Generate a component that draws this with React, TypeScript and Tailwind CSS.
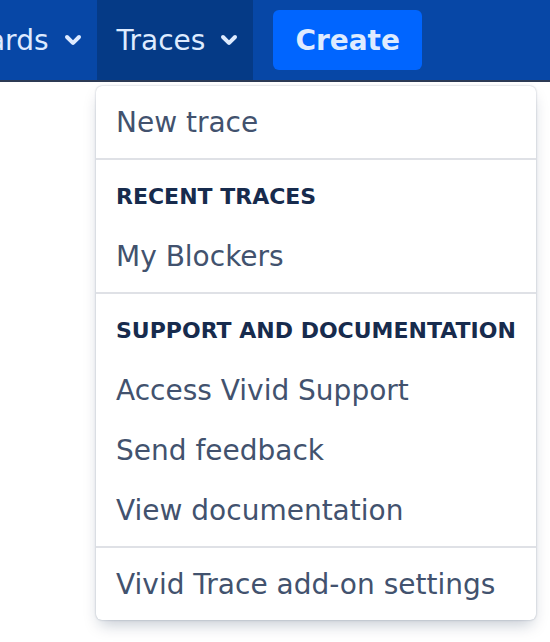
import React from "react";

const ChevronDown = () => (
    <svg viewBox="0 0 24 24" className="w-12 h-12 shrink-0 mt-[-2px]" fill="currentColor">
        <path d="M8.292 10.293a1.009 1.009 0 0 0 0 1.419l2.939 2.965c.218.215.5.322.779.322s.556-.107.769-.322l2.93-2.955a1.01 1.01 0 0 0 0-1.419.987.987 0 0 0-1.406 0l-2.298 2.317-2.307-2.327a.99.99 0 0 0-1.406 0z" />
    </svg>
);

const NavItem = ({ label, active }: { label: string; active?: boolean }) => (
    <div
        className={`flex items-center pl-[20px] h-full text-[28px] text-[#deebff] ${
            active ? "bg-[#053a86]" : ""
        }`}
    >
        <span className="whitespace-nowrap pt-[2px]">{label}</span>
        <ChevronDown />
    </div>
);

const MenuItem = ({ children }: { children: React.ReactNode }) => (
    <div className="h-[60px] pt-[2px] leading-[58px] px-[20px] text-[28px] text-[#42526e] whitespace-nowrap">
        {children}
    </div>
);

const MenuHeading = ({ children }: { children: React.ReactNode }) => (
    <div className="h-[60px] pt-[2px] leading-[58px] px-[20px] text-[22px] font-bold uppercase text-[#172b4d] whitespace-nowrap">
        {children}
    </div>
);

export default function App() {
    return (
        <div className="relative w-[550px] h-[642px] overflow-hidden bg-white font-['DejaVu_Sans',sans-serif]">
            <header className="flex items-stretch h-[82px] bg-[#0747a6] border-b-2 border-[#2c3a54]">
                <div className="flex items-stretch ml-[-138px]">
                    <NavItem label="Dashboards" />
                    <NavItem label="Traces" active />
                </div>
                <div className="flex items-center ml-[20px]">
                    <button className="h-[60px] px-[22px] pt-[2px] rounded-[6px] bg-[#0065ff] text-[28px] font-bold text-[#deebff]">
                        Create
                    </button>
                </div>
            </header>

            <div className="absolute left-[96px] top-[86px] w-[440px] bg-white rounded-[6px] shadow-[0_8px_16px_-4px_rgba(9,30,66,0.25),0_0_2px_rgba(9,30,66,0.31)]">
                <div className="py-[6px]">
                    <MenuItem>New trace</MenuItem>
                </div>
                <div className="py-[6px] border-t-2 border-[#dfe1e6]">
                    <MenuHeading>Recent traces</MenuHeading>
                    <MenuItem>My Blockers</MenuItem>
                </div>
                <div className="py-[6px] border-t-2 border-[#dfe1e6]">
                    <MenuHeading>Support and documentation</MenuHeading>
                    <MenuItem>Access Vivid Support</MenuItem>
                    <MenuItem>Send feedback</MenuItem>
                    <MenuItem>View documentation</MenuItem>
                </div>
                <div className="py-[6px] border-t-2 border-[#dfe1e6]">
                    <MenuItem>Vivid Trace add-on settings</MenuItem>
                </div>
            </div>
        </div>
    );
}
